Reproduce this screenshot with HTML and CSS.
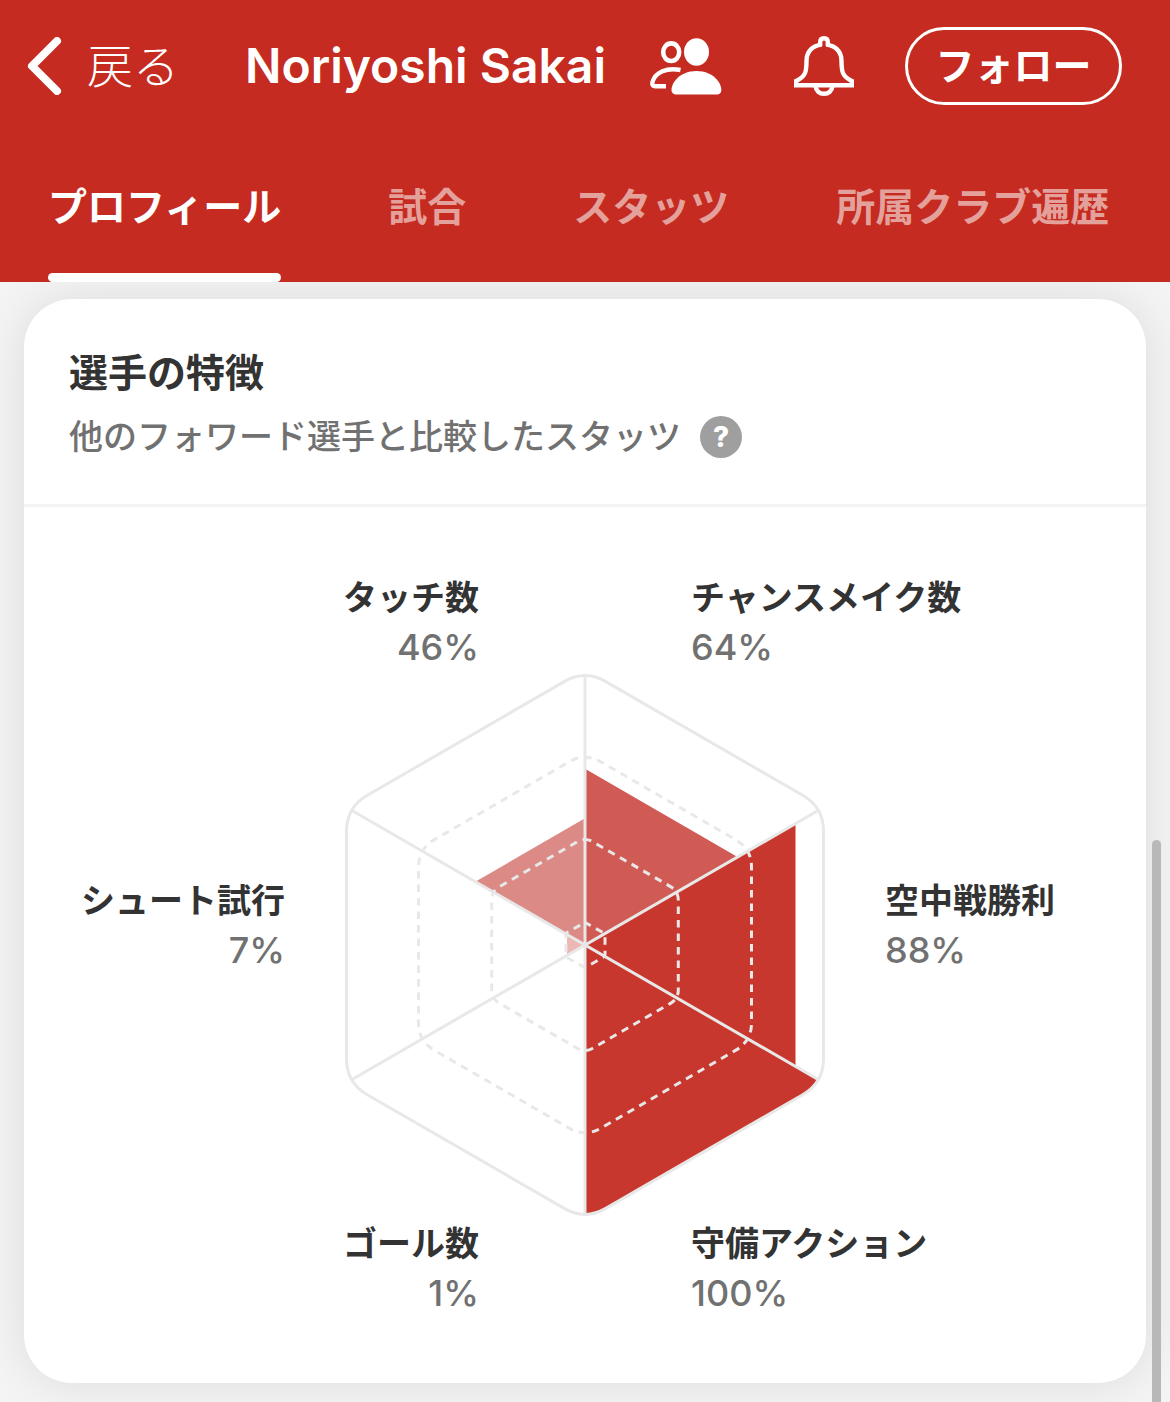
FILE: index.html
```html
<!DOCTYPE html>
<html lang="ja">
<head>
<meta charset="utf-8">
<meta name="viewport" content="width=device-width, initial-scale=1">
<title>Noriyoshi Sakai</title>
<link rel="stylesheet" href="styles.css">
</head>
<body>
<header class="header">
  <div class="topbar">
    <a class="back" href="#">
      <svg class="back-icon" viewBox="0 0 36 58" aria-hidden="true"><path d="M30 4 L5 29 L30 54"/></svg>
      <span>戻る</span>
    </a>
    <h1 class="player">Noriyoshi Sakai</h1>
    <button class="icon-button people" type="button" aria-label="選手を比較">
      <svg width="72" height="58" viewBox="0 0 72 58" aria-hidden="true">
        <ellipse cx="46.500" cy="15" rx="12.500" ry="13.700" fill="#fff"/>
        <path d="M27 57.500 C23 57.500 21.500 55.500 21.500 53 C21.500 45.500 30 34 46.500 34 C63 34 71.300 45.500 71.300 53 C71.300 55.500 70 57.500 66 57.500 Z" fill="#fff"/>
        <ellipse cx="21.200" cy="15.200" rx="8" ry="8.800" fill="none" stroke="#fff" stroke-width="4.600"/>
        <path d="M30.500 33 C16 30 6 36 3 43.500 C1.500 47.500 2.500 49.200 5.500 49.200 L16 49.200" fill="none" stroke="#fff" stroke-width="4.400"/>
      </svg>
    </button>
    <button class="icon-button bell" type="button" aria-label="通知">
      <svg width="62" height="62" viewBox="0 0 62 62" fill="none" stroke="#fff" stroke-width="4.400" aria-hidden="true">
        <path d="M27.200 11 V7 Q27.200 3.200 31 3.200 Q34.800 3.200 34.800 7 V11"/>
        <path d="M28.800 9.600 C19 10.500 13.500 17 13.500 26 C13.500 37 12.500 41.500 3.200 46 V50.200 H58.800 V46 C49.500 41.500 48.500 37 48.500 26 C48.500 17 43 10.500 33.200 9.600"/>
        <path d="M22.500 51 C23 56 26.500 58.800 31 58.800 C35.500 58.800 39 56 39.500 51"/>
      </svg>
    </button>
    <button class="follow" type="button">フォロー</button>
  </div>
  <nav class="tabs">
    <a class="tab tab-active" href="#" aria-current="page">プロフィール</a>
    <a class="tab" href="#">試合</a>
    <a class="tab" href="#">スタッツ</a>
    <a class="tab" href="#">所属クラブ遍歴</a>
  </nav>
</header>
<main class="content">
  <section class="card">
    <div class="card-head">
      <h2 class="card-title">選手の特徴</h2>
      <div class="card-sub">
        <p class="sub-text">他のフォワード選手と比較したスタッツ</p>
        <button class="help" type="button" aria-label="ヘルプ">?</button>
      </div>
    </div>
    <div class="radar">
      <div class="pair">
        <div class="stat stat-end"><span class="name">タッチ数</span><span class="value">46%</span></div>
        <div class="stat"><span class="name">チャンスメイク数</span><span class="value">64%</span></div>
      </div>
      <div class="middle">
        <div class="stat stat-end"><span class="name">シュート試行</span><span class="value">7%</span></div>
        <svg class="chart" viewBox="-240 -271 480 542" role="img" aria-label="選手の特徴チャート">
          <defs>
            <clipPath id="frame"><path d="M-20.800 -263.400 Q0 -275.400 20.800 -263.400 L217.700 -149.700 Q238.500 -137.700 238.500 -113.700 V113.700 Q238.500 137.700 217.700 149.700 L20.800 263.400 Q0 275.400 -20.800 263.400 L-217.700 149.700 Q-238.500 137.700 -238.500 113.700 V-113.700 Q-238.500 -137.700 -217.700 -149.700 Z"/></clipPath>
          </defs>
          <g clip-path="url(#frame)">
            <path fill="#dc8a86" d="M0 0 V-126.700 L-109.700 -63.300 Z"/>
            <path fill="#d05b55" d="M0 0 V-176.300 L152.600 -88.100 Z"/>
            <path fill="#c8372d" d="M0 0 L210.500 -121.500 V121.500 Z"/>
            <path fill="#c8372d" d="M0 0 L238.500 137.700 L0 275.400 Z"/>
            <path fill="#ecb7b5" d="M0 0 L-18 -10.400 V10.400 Z"/>
          </g>
          <g class="rings">
            <path d="M0 -187.800 Q8 -187.800 15.600 -183.300 L150.900 -105.100 Q166.500 -96.100 166.500 -78.100 V78.100 Q166.500 96.100 150.900 105.100 L15.600 183.300 Q0 192.300 -15.600 183.300 L-150.900 105.100 Q-166.500 96.100 -166.500 78.100 V-78.100 Q-166.500 -96.100 -150.900 -105.100 L-15.600 -183.300 Q-8 -187.800 0 -187.800"/>
            <path d="M0 -105.500 Q4 -105.500 7.800 -103.200 L85.500 -58.400 Q93.300 -53.900 93.300 -44.900 V44.900 Q93.300 53.900 85.500 58.400 L7.800 103.200 Q0 107.700 -7.800 103.200 L-85.500 58.400 Q-93.300 53.900 -93.300 44.900 V-44.900 Q-93.300 -53.900 -85.500 -58.400 L-7.800 -103.200 Q-4 -105.500 0 -105.500"/>
            <path d="M0 -22.500 L18 -12.500 Q20 -11.500 20 -9.500 V9.500 Q20 11.500 18 12.500 L2 21.500 Q0 22.500 -2 21.500 L-18 12.500 Q-19 11.500 -19 9.500 V-9.500 Q-19 -11.500 -18 -12.500 Z"/>
          </g>
          <path class="line" d="M0 -270 V270 M-233.500 -134.700 L233.500 134.700 M-233.500 134.700 L233.500 -134.700"/>
          <path class="line" d="M-20.800 -263.400 Q0 -275.400 20.800 -263.400 L217.700 -149.700 Q238.500 -137.700 238.500 -113.700 V113.700 Q238.500 137.700 217.700 149.700 L20.800 263.400 Q0 275.400 -20.800 263.400 L-217.700 149.700 Q-238.500 137.700 -238.500 113.700 V-113.700 Q-238.500 -137.700 -217.700 -149.700 Z"/>
        </svg>
        <div class="stat"><span class="name">空中戦勝利</span><span class="value">88%</span></div>
      </div>
      <div class="pair">
        <div class="stat stat-end"><span class="name">ゴール数</span><span class="value">1%</span></div>
        <div class="stat"><span class="name">守備アクション</span><span class="value">100%</span></div>
      </div>
    </div>
  </section>
  <div class="scroll-thumb"></div>
</main>
</body>
</html>
```
FILE: styles.css
```css
* {
  box-sizing: border-box;
}

body {
  margin: 0;
  background: #f4f4f4;
  color: #333;
  font-family: Inter, "Noto Sans CJK JP", sans-serif;
}

h1, h2, p {
  margin: 0;
}

button {
  padding: 0;
  border: 0;
  background: none;
  color: inherit;
  font-family: inherit;
}

a {
  color: inherit;
  text-decoration: none;
}

svg {
  display: block;
}

.header {
  position: relative;
  z-index: 1;
  background: #c52b20;
  color: #fff;
}

.topbar {
  display: flex;
  align-items: center;
  height: 132px;
  padding: 0 48px 0 27px;
}

.back {
  display: flex;
  align-items: center;
  gap: 24px;
  font-size: 46px;
  font-weight: 300;
  line-height: 56px;
}

.back-icon {
  width: 36px;
  height: 58px;
  fill: none;
  stroke: #fff;
  stroke-width: 8;
  stroke-linecap: round;
  stroke-linejoin: round;
}

.player {
  margin-left: 66px;
  font-size: 48px;
  font-weight: 600;
  line-height: 60px;
  white-space: nowrap;
}

.people {
  margin-left: auto;
}

.bell {
  margin-left: 71px;
}

.follow {
  width: 217px;
  height: 78px;
  margin-left: 50px;
  border: 3px solid #fff;
  border-radius: 39px;
  font-size: 39px;
  font-weight: 600;
  line-height: 72px;
}

.tabs {
  display: flex;
  gap: 107px;
  padding: 0 48px;
}

.tab {
  display: flex;
  flex-direction: column;
  justify-content: space-between;
  height: 150px;
  padding-top: 46px;
  color: #e4a09b;
  font-size: 39px;
  font-weight: 600;
  line-height: 58px;
  white-space: nowrap;
}

.tab-active {
  color: #fff;
}

.tab-active::after {
  height: 9px;
  border-radius: 5px;
  background: #fff;
  content: "";
}

.content {
  position: relative;
  padding: 17px 24px 19px;
}

.card {
  border-radius: 48px;
  background: #fff;
  box-shadow: 0 0 48px rgba(0, 0, 0, 0.1);
}

.card-head {
  padding: 44px 45px 40px;
  border-bottom: 3px solid #f3f3f3;
}

.card-title {
  font-size: 39px;
  font-weight: 600;
  line-height: 60px;
}

.card-sub {
  display: flex;
  align-items: center;
  gap: 19px;
  margin-top: 6px;
}

.sub-text {
  color: #717171;
  font-size: 34px;
  font-weight: 500;
  line-height: 55px;
}

.help {
  width: 42px;
  height: 42px;
  border-radius: 50%;
  background: #9f9f9f;
  color: #fff;
  font-size: 28px;
  font-weight: 800;
  line-height: 42px;
}

.radar {
  display: flex;
  flex-direction: column;
  gap: 3px;
  padding: 66px 0;
}

.pair {
  display: grid;
  grid-template-columns: 1fr 1fr;
  column-gap: 212px;
}

.middle {
  display: grid;
  grid-template-columns: 1fr 480px 1fr;
  align-items: center;
  column-gap: 60px;
}

.middle .stat {
  padding-bottom: 40px;
}

.chart {
  width: 100%;
}

.stat {
  display: flex;
  flex-direction: column;
}

.stat-end {
  align-items: flex-end;
}

.name {
  font-size: 34px;
  font-weight: 600;
  line-height: 50px;
}

.value {
  color: #717171;
  font-size: 36px;
  font-weight: 500;
  line-height: 48px;
}

.rings,
.line {
  fill: none;
  stroke: #e8e8e8;
  stroke-width: 3;
}

.rings {
  stroke-dasharray: 7.5 6;
  stroke-dashoffset: 1;
}

.scroll-thumb {
  position: absolute;
  top: 558px;
  right: 9px;
  bottom: 0;
  width: 9px;
  border-radius: 5px 5px 0 0;
  background: #b8b8b8;
}
```
